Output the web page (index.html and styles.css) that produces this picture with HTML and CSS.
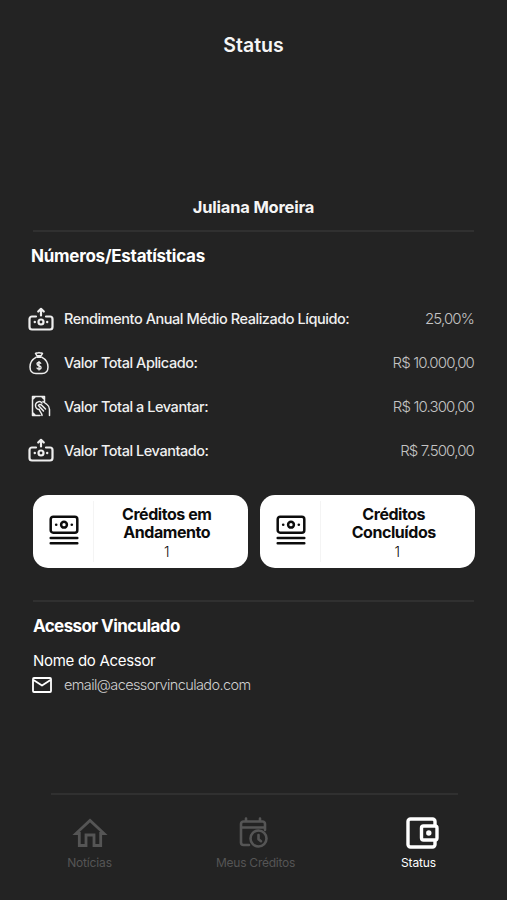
FILE: index.html
```
<!DOCTYPE html>
<html lang="pt-BR">
<head>
  <meta charset="UTF-8">
  <title>Status</title>
  <link rel="stylesheet" href="styles.css">
</head>
<body>

  <!-- ICONS -->
  <svg class="defs" width="0" height="0">
    <symbol id="cash-out" viewBox="0 0 26 24">
      <g fill="none" stroke="currentColor" stroke-width="2.2" stroke-linecap="round" stroke-linejoin="round">
        <path d="M8 9.5H4A2.5 2.5 0 0 0 1.5 12v8A2.5 2.5 0 0 0 4 22.5h18a2.5 2.5 0 0 0 2.5-2.5v-8A2.5 2.5 0 0 0 22 9.5h-4"/>
        <path d="M13 8.5V3M10.2 4.5 13 1.8l2.8 2.7"/>
        <circle cx="13" cy="15" r="2.5"/>
      </g>
      <circle cx="6.8" cy="15" r="1.2" fill="currentColor"/>
      <circle cx="19.2" cy="15" r="1.2" fill="currentColor"/>
    </symbol>
    <symbol id="cash-stack" viewBox="0 0 30 30">
      <g fill="none" stroke="currentColor" stroke-width="2.5" stroke-linecap="round">
        <rect x="1.7" y="1.7" width="26.6" height="16" rx="2.5"/>
        <circle cx="15" cy="9.7" r="2.9"/>
        <path d="M1.7 23h26.6M1.7 28.3h26.6"/>
      </g>
      <circle cx="7.2" cy="9.7" r="1.3" fill="currentColor"/>
      <circle cx="22.8" cy="9.7" r="1.3" fill="currentColor"/>
    </symbol>
  </svg>

  <header>
    <h1>Status</h1>
  </header>

  <main>
    <h2 class="user-name">Juliana Moreira</h2>

    <!-- STATISTICS -->
    <section class="stats">
      <h3>Números/Estatísticas</h3>
      <ul>
        <li>
          <svg class="icon" width="26" height="24"><use href="#cash-out"/></svg>
          <span class="label">Rendimento Anual Médio Realizado Líquido:</span>
          <span class="value">25,00%</span>
        </li>
        <li>
          <svg class="icon bag" width="20" height="24" viewBox="0 0 20 24" fill="none" stroke="currentColor" stroke-width="1.5" stroke-linejoin="round">
            <path d="M7.3 6.2C4 8 1 11.5 1 16c0 4.5 2.5 6.5 6 6.500h6c3.5 0 6-2 6-6.5 0-4.500-3-8-6.300-9.800"/>
            <path d="M7.3 6.2h5.4M8 4.8 6.5 2.3c1.2-.9 2.2.5 3.5-.8 1.3 1.3 2.3-.1 3.5.8L12 4.800z"/>
            <path d="M12 12.800c-.3-.9-1-1.300-2-1.300-1.2 0-2 .6-2 1.600 0 2.300 4.100 1 4.100 3.300 0 1-.8 1.700-2.100 1.700-1.200 0-2-.5-2.200-1.500M10 10v9.500" stroke-width="1.3"/>
          </svg>
          <span class="label">Valor Total Aplicado:</span>
          <span class="value">R$ 10.000,00</span>
        </li>
        <li>
          <svg class="icon hand" width="20" height="22" viewBox="0 0 20 22" fill="none" stroke="currentColor" stroke-width="1.5" stroke-linecap="round" stroke-linejoin="round">
            <path d="M9 20.500H1.500V1.500H13.500v5M1.500 4.500l3-3M10.500 1.500l3 3M1.500 17.500l3 3"/>
            <path d="M11 8C9.500 6 5.500 6 4.600 9.300 4 12 5.500 14.500 8.300 14.500M7.500 10.500c1-1.500 2.500-1 3.500 0l3.500 3.500M7.500 10.500l5 5.500"/>
            <path d="M12 6.500l4 3c1.700 1.200 2.500 3 2.500 5v6M8.300 14.500c0 2 2.700 3 2.700 6"/>
          </svg>
          <span class="label">Valor Total a Levantar:</span>
          <span class="value">R$ 10.300,00</span>
        </li>
        <li>
          <svg class="icon" width="26" height="24"><use href="#cash-out"/></svg>
          <span class="label">Valor Total Levantado:</span>
          <span class="value">R$ 7.500,00</span>
        </li>
      </ul>

      <div class="cards">
        <div class="card">
          <svg width="30" height="30"><use href="#cash-stack"/></svg>
          <div class="card-text">
            <strong>Créditos em<br>Andamento</strong>
            <span>1</span>
          </div>
        </div>
        <div class="card concluidos">
          <svg width="30" height="30"><use href="#cash-stack"/></svg>
          <div class="card-text">
            <strong>Créditos<br>Concluídos</strong>
            <span>1</span>
          </div>
        </div>
      </div>
    </section>

    <!-- ADVISOR -->
    <section class="advisor">
      <h3>Acessor Vinculado</h3>
      <p class="advisor-name">Nome do Acessor</p>
      <p class="advisor-email">
        <svg width="20" height="16" viewBox="0 0 20 16" fill="none" stroke="currentColor" stroke-width="1.8" stroke-linejoin="round">
          <rect x="1" y="1" width="18" height="14" rx="1"/>
          <path d="M1.5 3 10 8.5 18.5 3"/>
        </svg>
        <span>email@acessorvinculado.com</span>
      </p>
    </section>
  </main>

  <!-- BOTTOM NAV -->
  <nav>
    <a>
      <svg width="36" height="32" viewBox="0 0 36 32" fill="none" stroke="currentColor" stroke-width="2.8">
        <path d="M4 16.500H7.300v12h6.700V18h8v10.500h6.700v-12H32L18 3.500z"/>
      </svg>
      <span>Notícias</span>
    </a>
    <a class="creditos">
      <svg width="30" height="32" viewBox="0 0 30 32" fill="none" stroke="currentColor" stroke-width="2.6" stroke-linecap="round" stroke-linejoin="round">
        <path d="M10 28H4.500A2.500 2.500 0 0 1 2 25.500V7a2.500 2.500 0 0 1 2.500-2.500h19A2.500 2.500 0 0 1 26 7v6M2 10.500h24M7 1.500v3M21 1.500v3"/>
        <circle cx="19.5" cy="21.5" r="8"/>
        <path d="M19.5 18v4.200l2.500 2"/>
      </svg>
      <span>Meus Créditos</span>
    </a>
    <a class="status active">
      <svg width="34" height="32" viewBox="0 0 34 32" fill="none" stroke="currentColor" stroke-width="3.4" stroke-linejoin="round">
        <path d="M29 8V4.500A2.500 2.500 0 0 0 26.500 2h-22A2.500 2.500 0 0 0 2 4.500v23A2.500 2.500 0 0 0 4.500 30h22a2.500 2.500 0 0 0 2.500-2.500V24"/>
        <rect x="15.5" y="9" width="15.5" height="14" rx="2"/>
        <circle cx="22.8" cy="16" r="2.7" fill="currentColor" stroke="none"/>
      </svg>
      <span>Status</span>
    </a>
  </nav>

</body>
</html>
```

FILE: styles.css
```
/* ------------- RESET & BASE ------------- */
* { margin: 0; padding: 0; box-sizing: border-box; }
body {
  font-family: Inter, 'Open Sans', sans-serif;
  display: flex; flex-direction: column;
  height: 900px;
  background: #232323; color: #fff;
  overflow: hidden;
}
.defs { display: block; flex: none; }
ul { list-style: none; }
a { color: inherit; text-decoration: none; }
span, h1, h2, h3, strong { white-space: nowrap; }

/* ------------- HEADER ------------- */
header { padding-top: 33px; text-align: center; }
h1 { font-size: 19.5px; line-height: 24px; font-weight: 600; color: #f5f5f5; }

/* ------------- MAIN ------------- */
main { flex: 1; padding: 138px 33px 0 33px; }
.user-name {
  height: 37px;
  font-size: 16.5px; line-height: 24px; font-weight: 700;
  letter-spacing: -0.2px; text-align: center; color: #f5f5f5;
  border-bottom: 2px solid #303030;
}
h3 { font-size: 17px; line-height: 24px; font-weight: 700; letter-spacing: -0.6px; }

/* ------------- STATS ------------- */
.stats { padding: 12px 0 32px; border-bottom: 2px solid #303030; }
.stats h3 { margin-left: -2px; letter-spacing: -0.25px; }
.stats ul { padding-top: 29px; margin-left: -5px; }
.stats li {
  display: grid; grid-template-columns: 26px 1fr auto;
  column-gap: 10px; align-items: center;
  height: 43.8px;
}
.icon { justify-self: center; color: #eee; }
.bag { margin-right: 4px; }
.label { font-size: 14.5px; font-weight: 500; letter-spacing: -0.45px; color: #f0f0f0; }
.value { font-size: 15px; font-weight: 300; letter-spacing: -0.85px; color: #c4c4c4; }

/* ------------- CARDS ------------- */
.cards {
  display: grid; grid-template-columns: 1fr 1fr; gap: 12px;
  margin: 22.8px -1px 0 0;
}
.card {
  display: flex; align-items: center;
  height: 73px; padding-left: 16px;
  background: #fff; color: #0c0c0c;
  border-radius: 15px;
}
.card svg { flex: none; margin-top: -3px; }
.card-text {
  flex: 1; margin-left: 13.5px; padding: 4px 8px 0 0;
  border-left: 1px solid #f4f4f4;
  text-align: center;
}
.card-text strong { display: block; font-size: 16px; line-height: 18.5px; letter-spacing: -0.45px; }
.card-text span { display: block; font-size: 14px; line-height: 20px; font-weight: 300; }
.concluidos span { padding-left: 7px; }

/* ------------- ADVISOR ------------- */
.advisor { padding-top: 12px; }
.advisor-name { margin-top: 13px; font-size: 15px; line-height: 20px; letter-spacing: -0.3px; }
.advisor-email {
  display: flex; align-items: center; gap: 12px;
  height: 28px; margin-left: -1px;
  font-size: 14.5px; font-weight: 300; letter-spacing: -0.6px;
}
.advisor-email span { margin-top: -1px; color: #d0d0d0; }

/* ------------- NAV ------------- */
nav {
  display: grid; grid-template-columns: 77px 1fr 79px;
  height: 107px; margin: 0 49px 0 51px; padding-top: 22px;
  border-top: 2px solid #303030;
  color: #555;
}
nav a { display: flex; flex-direction: column; align-items: center; }
nav span { margin-top: 6px; font-size: 12px; line-height: 16px; letter-spacing: -0.15px; }
.creditos span { margin-left: 4px; letter-spacing: -0.25px; }
.status svg { margin-left: 8px; }
.active { color: #fff; }
```
